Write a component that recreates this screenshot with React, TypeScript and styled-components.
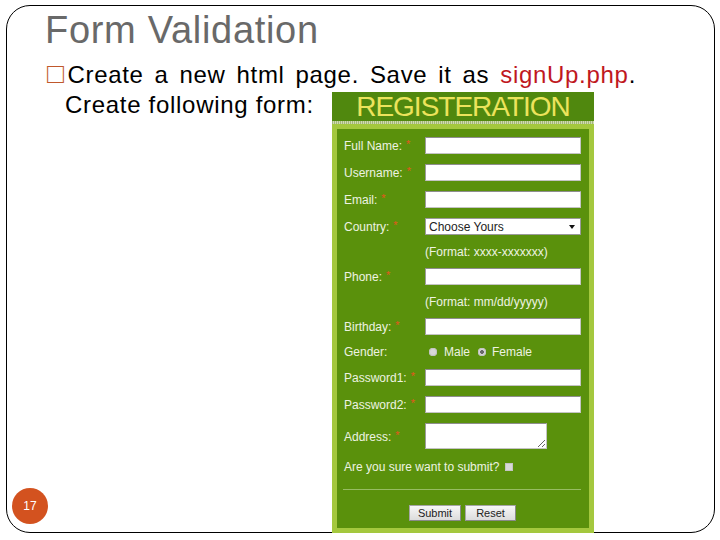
import React from "react";
import styled, { createGlobalStyle } from "styled-components";

const Global = createGlobalStyle`
  html, body { margin: 0; padding: 0; background: #ffffff; }
  body { font-family: "Liberation Sans", Arial, sans-serif; }
`;

const Slide = styled.div`
  position: relative;
  box-sizing: border-box;
  width: 709px;
  height: 528px;
  margin: 5px 0 0 6px;
  border: 1px solid #000;
  border-radius: 24px;
  padding: 5px 0 0 38px;
`;

const Title = styled.h1`
  margin: 0;
  font-family: "Liberation Sans", Arial, sans-serif;
  font-weight: normal;
  font-size: 38px;
  line-height: 38px;
  letter-spacing: 0.7px;
  color: #696969;
`;

const Line1 = styled.div`
  margin: 11px 0 0 2px;
  width: 589px;
  font-size: 24px;
  line-height: 30px;
  letter-spacing: 0.7px;
  color: #000;
  text-align: justify;
  text-align-last: justify;
`;

const Bullet = styled.span`
  font-size: 28px;
  line-height: 0;
  color: #c0582c;
  letter-spacing: 0;
`;

const Red = styled.span`
  color: #c0181e;
`;

const Line2 = styled.div`
  display: flex;
  align-items: flex-start;
  padding-left: 20px;
`;

const Line2Text = styled.div`
  flex-shrink: 0;
  width: 267px;
  font-size: 24px;
  line-height: 30px;
  letter-spacing: 0.7px;
  color: #000;
`;

const Form = styled.div`
  margin-top: 2px;
  width: 262px;
  height: 441px;
  display: flex;
  flex-direction: column;
  flex-shrink: 0;
`;

const Header = styled.div`
  height: 29px;
  background: #50880e;
  color: #ece35c;
  font-size: 28px;
  line-height: 29px;
  letter-spacing: -1px;
  text-align: center;
`;

const Strip = styled.div`
  height: 3px;
  background: repeating-linear-gradient(90deg, #a3b877 0 1px, #d0dab2 1px 2px);
`;

const Panel = styled.div`
  flex: 1;
  border: 5px solid #a4c83e;
  background: #5a910c;
  padding: 3px 8px 1px 7px;
  display: flex;
  flex-direction: column;
`;

const Row = styled.div<{ $h: number }>`
  display: grid;
  grid-template-columns: 81px 1fr;
  align-items: center;
  height: ${(p) => p.$h}px;
  font-size: 12px;
  color: #eef3e2;
`;

const Label = styled.span`
  white-space: nowrap;
`;

const Req = styled.span`
  color: #e4561c;
  font-size: 11px;
  margin-left: 4px;
  vertical-align: 2px;
`;

const TextInput = styled.input`
  box-sizing: border-box;
  width: 100%;
  height: 17px;
  margin: 0;
  padding: 0 2px;
  border: 1px solid #c4c4c4;
  border-top-color: #8e8e8e;
  border-left-color: #9c9c9c;
  background: #fff;
  font: 12px "Liberation Sans", Arial, sans-serif;
  outline: none;
`;

const SelectBox = styled.div`
  box-sizing: border-box;
  height: 17px;
  display: flex;
  align-items: center;
  justify-content: space-between;
  padding: 0 5px 0 3px;
  border: 1px solid #9a9a9a;
  background: #fff;
  color: #222;
  font-size: 12px;
`;

const Hint = styled.span`
  grid-column: 2;
  white-space: nowrap;
`;

const Options = styled.div`
  display: flex;
  align-items: center;
`;

const Radio = styled.span<{ $checked?: boolean }>`
  width: 8px;
  height: 8px;
  border-radius: 50%;
  margin-left: ${(p) => (p.$checked ? 8 : 4)}px;
  margin-right: ${(p) => (p.$checked ? 6 : 7)}px;
  background: ${(p) =>
    p.$checked
      ? "radial-gradient(circle, #6a6a6a 0 1.6px, #d8d8d8 2.2px)"
      : "#d8d8d8"};
  box-shadow: inset 0 0 0 1px #c2c2c2;
`;

const TextArea = styled.textarea`
  box-sizing: border-box;
  width: 122px;
  height: 26px;
  margin: 0;
  padding: 1px 2px;
  border: 1px solid #c4c4c4;
  border-top-color: #8e8e8e;
  border-left-color: #9c9c9c;
  background: #fff;
  font: 12px "Liberation Sans", Arial, sans-serif;
  outline: none;
  resize: both;
`;

const Confirm = styled.div`
  grid-column: 1 / -1;
  display: flex;
  align-items: center;
  gap: 6px;
`;

const CheckBox = styled.span`
  width: 8px;
  height: 8px;
  background: #d8d8d8;
  box-shadow: inset 0 0 0 1px #c4c4c4;
`;

const Divider = styled.div`
  grid-column: 1 / -1;
  height: 1px;
  margin-left: -1px;
  background: #97bc62;
`;

const Buttons = styled.div`
  grid-column: 1 / -1;
  display: flex;
  justify-content: center;
  gap: 4px;
`;

const Button = styled.button<{ $w: number }>`
  box-sizing: border-box;
  width: ${(p) => p.$w}px;
  height: 16px;
  padding: 0;
  margin: 0;
  border: 1px solid #a6a6a6;
  border-right-color: #8a8a8a;
  border-bottom-color: #8a8a8a;
  background: linear-gradient(#f7f7f7, #dcdcdc);
  color: #222;
  font: 11px "Liberation Sans", Arial, sans-serif;
`;

const Badge = styled.div`
  position: absolute;
  left: 5px;
  top: 482px;
  width: 36px;
  height: 36px;
  border-radius: 50%;
  background: #d3521f;
  color: #fff;
  font-size: 12px;
  display: flex;
  align-items: center;
  justify-content: center;
`;

const Field = ({ label, children, h = 27, req = true }: { label: string; children: React.ReactNode; h?: number; req?: boolean }) => (
  <Row $h={h}>
    <Label>
      {label}
      {req && <Req>*</Req>}
    </Label>
    {children}
  </Row>
);

export default function App() {
  return (
    <>
      <Global />
      <Slide>
        <Title>Form Validation</Title>
        <Line1>
          <Bullet>□</Bullet>Create a new html page. Save it as <Red>signUp.php</Red>.
        </Line1>
        <Line2>
          <Line2Text>Create following form:</Line2Text>
          <Form>
            <Header>REGISTERATION</Header>
            <Strip />
            <Panel>
              <Field label="Full Name:">
                <TextInput type="text" />
              </Field>
              <Field label="Username:">
                <TextInput type="text" />
              </Field>
              <Field label="Email:">
                <TextInput type="text" />
              </Field>
              <Field label="Country:">
                <SelectBox>
                  <span>Choose Yours</span>
                  <svg width="6" height="4" viewBox="0 0 6 4">
                    <path d="M0 0H6L3 4Z" fill="#111" />
                  </svg>
                </SelectBox>
              </Field>
              <Row $h={23}>
                <Hint>(Format: xxxx-xxxxxxx)</Hint>
              </Row>
              <Field label="Phone:">
                <TextInput type="text" />
              </Field>
              <Row $h={23}>
                <Hint>(Format: mm/dd/yyyyy)</Hint>
              </Row>
              <Field label="Birthday:">
                <TextInput type="text" />
              </Field>
              <Field label="Gender:" h={24} req={false}>
                <Options>
                  <Radio />
                  <span>Male</span>
                  <Radio $checked />
                  <span>Female</span>
                </Options>
              </Field>
              <Field label="Password1:">
                <TextInput type="password" />
              </Field>
              <Field label="Password2:">
                <TextInput type="password" />
              </Field>
              <Field label="Address:" h={36}>
                <TextArea />
              </Field>
              <Row $h={25}>
                <Confirm>
                  <span>Are you sure want to submit?</span>
                  <CheckBox />
                </Confirm>
              </Row>
              <Row $h={20}>
                <Divider />
              </Row>
              <Row $h={28}>
                <Buttons>
                  <Button $w={52}>Submit</Button>
                  <Button $w={51}>Reset</Button>
                </Buttons>
              </Row>
            </Panel>
          </Form>
        </Line2>
        <Badge>17</Badge>
      </Slide>
    </>
  );
}
